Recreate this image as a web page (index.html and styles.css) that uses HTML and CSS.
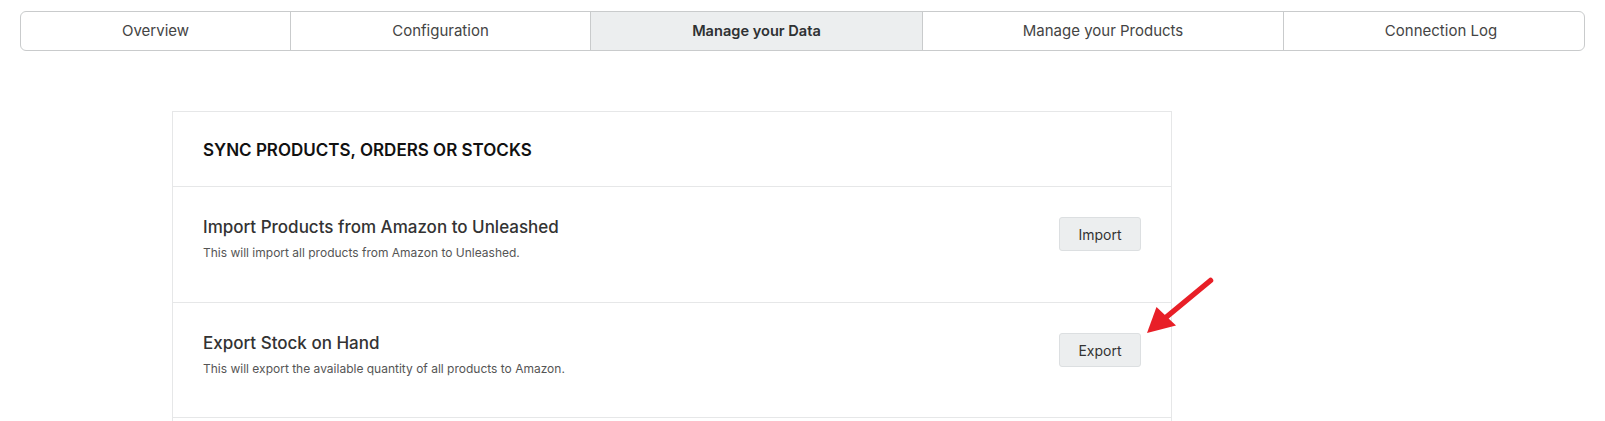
FILE: index.html
```html
<!DOCTYPE html>
<html lang="en">
<head>
    <meta charset="UTF-8">
    <meta name="viewport" content="width=device-width, initial-scale=1.0">
    <title>Amazon Integration</title>
    <link rel="stylesheet" href="styles.css">
</head>
<body>
    <nav class="tabs">
        <a class="tab" href="#">Overview</a>
        <a class="tab" href="#">Configuration</a>
        <a class="tab active" href="#">Manage your Data</a>
        <a class="tab" href="#">Manage your Products</a>
        <a class="tab" href="#">Connection Log</a>
    </nav>

    <div class="card">
        <h2 class="card-header">SYNC PRODUCTS, ORDERS OR STOCKS</h2>

        <div class="row">
            <div class="row-text">
                <h3>Import Products from Amazon to Unleashed</h3>
                <p>This will import all products from Amazon to Unleashed.</p>
            </div>
            <button class="btn">Import</button>
        </div>

        <div class="row">
            <div class="row-text">
                <h3>Export Stock on Hand</h3>
                <p>This will export the available quantity of all products to Amazon.</p>
            </div>
            <button class="btn">Export</button>
        </div>

        <svg class="pointer" width="80" height="70" viewBox="0 0 80 70">
            <line x1="70.5" y1="11.5" x2="24" y2="50" stroke="#e81f27" stroke-width="5.5" stroke-linecap="round"/>
            <polygon points="7,64 16.5,38 36,56.5" fill="#e81f27"/>
        </svg>
    </div>
</body>
</html>
```
FILE: styles.css
```css
body {
    margin: 0;
    font-family: "Inter", "Liberation Sans", sans-serif;
    background-color: #fff;
    color: #333;
}
.tabs {
    display: grid;
    grid-template-columns: 269px 300px 332px 361px 1fr;
    margin: 11px 20px 0;
    border: 1px solid #c9cbcc;
    border-radius: 6px;
    overflow: hidden;
}
.tab {
    height: 38px;
    line-height: 38px;
    text-align: center;
    font-size: 15px;
    color: #444;
    text-decoration: none;
    border-left: 1px solid #c9cbcc;
}
.tab:first-child {
    border-left: none;
}
.tab:last-child {
    padding-left: 14px;
}
.tab.active {
    background-color: #eceeef;
    color: #2f3133;
    font-weight: 600;
    font-size: 14.6px;
}
.card {
    position: relative;
    box-sizing: border-box;
    width: 1000px;
    margin: 60px 0 0 172px;
    border: 1px solid #e6e7e8;
    padding-bottom: 20px;
}
.card-header {
    margin: 0;
    padding: 28px 30px 26px;
    font-size: 17px;
    line-height: 20px;
    font-weight: 600;
    color: #111;
}
.row {
    display: flex;
    justify-content: space-between;
    align-items: flex-start;
    padding: 30px 30px 41px;
    border-top: 1px solid #e6e7e8;
}
.row:last-of-type {
    padding-bottom: 40px;
    border-bottom: 1px solid #e6e7e8;
}
.row-text h3 {
    margin: 0 0 8px;
    font-size: 17px;
    line-height: 20px;
    font-weight: 500;
    color: #333;
}
.row-text p {
    margin: 0;
    font-size: 12px;
    line-height: 16px;
    color: #555;
}
.btn {
    width: 82px;
    height: 34px;
    padding: 0;
    font-family: inherit;
    font-size: 14px;
    color: #333;
    background-color: #eceeef;
    border: 1px solid #dcdfe1;
    border-radius: 3px;
    cursor: pointer;
}
.btn:hover {
    background-color: #e0e3e5;
}
.pointer {
    position: absolute;
    left: 967px;
    top: 157px;
}
```
